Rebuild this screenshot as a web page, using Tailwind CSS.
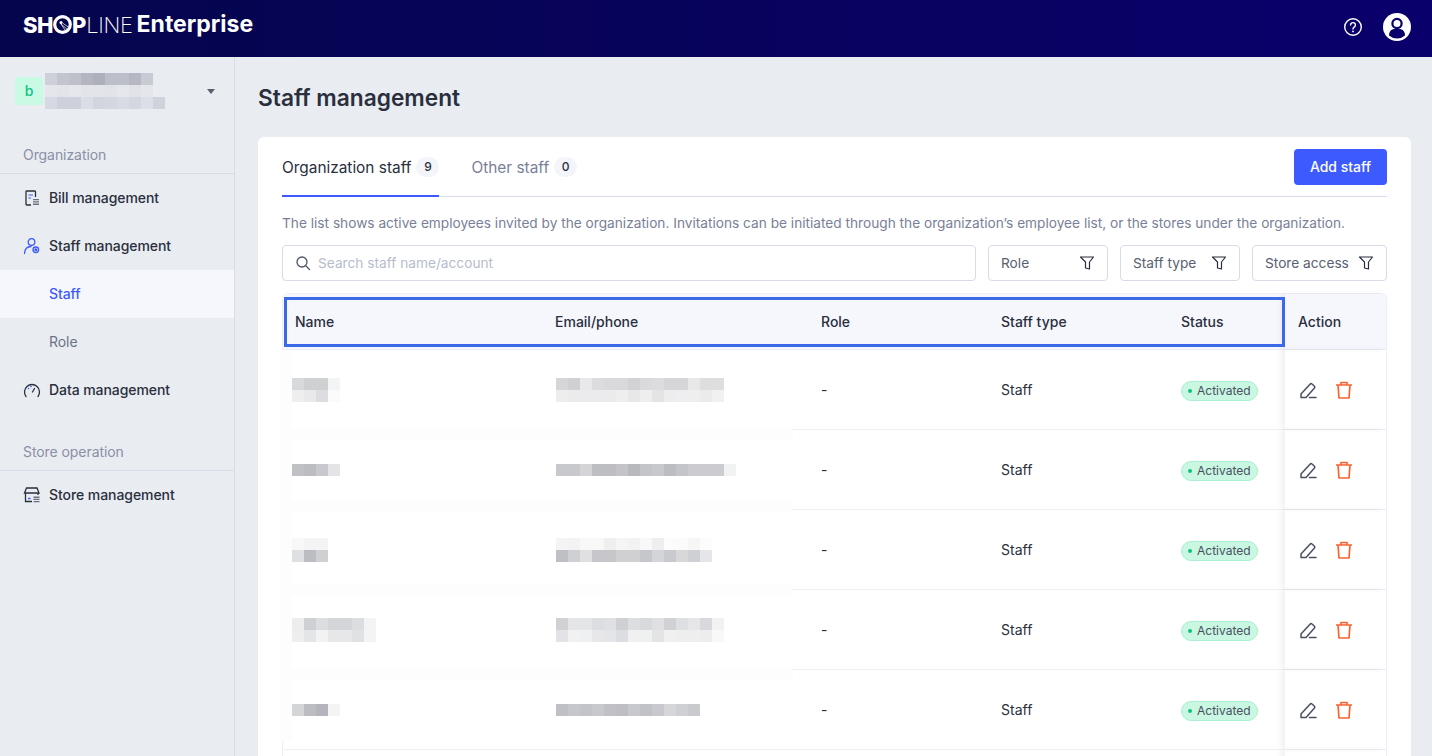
<!DOCTYPE html>
<html lang="en">
<head>
    <meta charset="UTF-8">
    <title>Staff management</title>
    <script src="https://cdn.jsdelivr.net/npm/@tailwindcss/browser@4"></script>
</head>
<body class="h-[756px] overflow-hidden bg-[#e9ecf1] font-['Inter',sans-serif] text-[#2a2f3d]">

<!-- top bar -->
<header class="h-[57px] flex items-center justify-between bg-gradient-to-r from-[#05054d] to-[#0a006c] pl-[23px] pr-[21px]">
    <div class="flex items-center text-white text-[22px] leading-none mb-[8px]">
        <span class="font-extrabold tracking-[-0.5px]">SH</span>
        <svg class="w-[19px] h-[19px]" viewBox="0 0 19 19" fill="none"><circle cx="9.500" cy="9.500" r="7.800" fill="#05054d" stroke="#fff" stroke-width="3.200"/><circle cx="8" cy="7.500" r="1.500" fill="#fff"/><path d="M8 9l7 6M8 9l5 7.500M9.500 8l6.500 4.500" stroke="#fff" stroke-width=".7"/></svg>
        <span class="font-extrabold">P</span>
        <span class="font-extralight tracking-[-0.4px]">LINE</span>
        <span class="font-bold ml-[4px] text-[23px]">Enterprise</span>
    </div>
    <div class="flex items-center gap-[20px] mb-[4px]">
        <svg class="w-[20px] h-[20px]" viewBox="0 0 20 20" fill="none" stroke="#fff" stroke-width="1.400"><circle cx="10" cy="10" r="8.300"/><path d="M7.600 8a2.400 2.400 0 1 1 3.600 2.100c-.8.500-1.200.900-1.200 1.900" stroke-linecap="round"/><circle cx="10" cy="14.400" r=".9" fill="#fff" stroke="none"/></svg>
        <svg class="w-[28px] h-[28px]" viewBox="0 0 28 28"><circle cx="14" cy="14" r="14" fill="#fff"/><circle cx="14" cy="10.500" r="4.600" fill="none" stroke="#0a006c" stroke-width="2.200"/><path d="M6 22.500c0-4.500 3-6.500 5.500-6.500h5c2.500 0 5.500 2 5.500 6.500a12 12 0 0 1-16 0z" fill="#0a006c"/></svg>
    </div>
</header>

<div class="flex h-[699px]">
    <!-- sidebar -->
    <aside class="w-[235px] shrink-0 border-r border-[#d8dbe8] text-sm font-medium tracking-[-0.07px]">
        <div class="h-[73px] flex items-center pl-[15px] pr-[19px] pb-[5px]">
            <div class="w-7 h-7 rounded-[3px] bg-[#c9fbe4] text-[#12c086] flex items-center justify-center text-sm">b</div>
            <div class="ml-[2px] flex-1 flex flex-col -mt-[1px]">
                <div class="flex">
                    <i class="w-3 h-3 bg-[#cdd0d8]"></i><i class="w-3 h-3 bg-[#c2c5ce]"></i><i class="w-3 h-3 bg-[#bec1ca]"></i><i class="w-3 h-3 bg-[#b3b6c0]"></i><i class="w-3 h-3 bg-[#adb0ba]"></i><i class="w-3 h-3 bg-[#bcbfc9]"></i><i class="w-3 h-3 bg-[#bcbfc9]"></i><i class="w-3 h-3 bg-[#b5b8c2]"></i><i class="w-3 h-3 bg-[#c8cbd4]"></i>
                </div>
                <div class="flex">
                    <i class="w-3 h-3 bg-[#e4e6eb]"></i><i class="w-3 h-3 bg-[#e2e4ea]"></i><i class="w-3 h-3 bg-[#e5e7ec]"></i><i class="w-3 h-3 bg-[#e2e4ea]"></i><i class="w-3 h-3 bg-[#e2e4ea]"></i><i class="w-3 h-3 bg-[#e0e3ea]"></i><i class="w-3 h-3 bg-[#e5e7ec]"></i><i class="w-3 h-3 bg-[#e0e2e8]"></i><i class="w-3 h-3 bg-[#e4e6eb]"></i>
                </div>
                <div class="flex">
                    <i class="w-3 h-3 bg-[#d6d9e2]"></i><i class="w-3 h-3 bg-[#ced1db]"></i><i class="w-3 h-3 bg-[#ced1db]"></i><i class="w-3 h-3 bg-[#dadde5]"></i><i class="w-3 h-3 bg-[#d2d5de]"></i><i class="w-3 h-3 bg-[#d4d7e0]"></i><i class="w-3 h-3 bg-[#d8dbe3]"></i><i class="w-3 h-3 bg-[#d4d7e0]"></i><i class="w-3 h-3 bg-[#dcdfe7]"></i><i class="w-3 h-3 bg-[#d0d3dc]"></i>
                </div>
            </div>
            <span class="w-0 h-0 border-x-[4px] border-x-transparent border-t-[5px] border-t-[#5a5f6e] -ml-[2px]"></span>
        </div>

        <div class="h-[44px] flex items-end pb-[8px] pl-[23px] border-b border-[#d8dbe8] font-normal text-[#8a90a6]">Organization</div>
        <div class="h-[48px] flex items-center pl-[23px]">
            <svg class="w-[18px] h-[18px] mr-[8px]" viewBox="0 0 18 18" fill="none"><path d="M12.500 8V2.800a.8.800 0 0 0-.8-.8H3.800a.8.800 0 0 0-.8.800v12.400a.8.800 0 0 0 .8.800H8" stroke="#2a2f3d" stroke-width="1.300"/><path d="M5.500 6h4.500M5.500 9h2.500" stroke="#3d5afe" stroke-width="1.200"/><path d="M10 10h6v1.300h-6zM10 12.300h6v1.300h-6zM10 14.600h6v1.400h-6z" fill="#6b7080"/></svg>
            Bill management
        </div>
        <div class="h-[48px] flex items-center pl-[23px]">
            <svg class="w-[18px] h-[18px] mr-[8px]" viewBox="0 0 18 18" fill="none" stroke="#3d5afe" stroke-width="1.300"><circle cx="8.500" cy="5" r="3.300"/><path d="M1.500 16.500c.3-4.500 2.800-7 6.500-7" stroke-linecap="round"/><circle cx="12.800" cy="12.800" r="2.800"/><circle cx="12.800" cy="12.800" r=".9" fill="#3d5afe"/></svg>
            Staff management
        </div>
        <div class="h-[48px] flex items-center pl-[49px] bg-[#f5f7fd] text-[#3d5afe]">Staff</div>
        <div class="h-[48px] flex items-center pl-[49px] font-normal text-[#6d7387]">Role</div>
        <div class="h-[48px] flex items-center pl-[23px]">
            <svg class="w-[18px] h-[18px] mr-[8px]" viewBox="0 0 18 18" fill="none" stroke="#2a2f3d" stroke-width="1.300"><path d="M3 15.500A7.500 7.500 0 1 1 15 15.500" stroke-linecap="round"/><path d="M11.500 7.500 9.500 11" stroke-linecap="round"/><circle cx="5.500" cy="7.500" r=".8" fill="#3d5afe" stroke="none"/><circle cx="8" cy="5.500" r=".8" fill="#3d5afe" stroke="none"/></svg>
            Data management
        </div>
        <div class="h-[57px] flex items-end pb-[8px] pl-[23px] border-b border-[#d8dbe8] font-normal text-[#8a90a6]">Store operation</div>
        <div class="h-[48px] flex items-center pl-[23px]">
            <svg class="w-[18px] h-[18px] mr-[8px]" viewBox="0 0 18 18" fill="none"><path d="M3.500 2h10.500l2 5H1.500zM2.500 7v8.500H9M15 7v2" stroke="#2a2f3d" stroke-width="1.300"/><path d="M5 12.500h2.500" stroke="#3d5afe" stroke-width="1.500"/><path d="M10.500 10.500h6v1.400h-6zM10.500 12.700h6v1.400h-6zM10.500 14.900h6v1.400h-6z" fill="#6b7080"/></svg>
            Store management
        </div>
    </aside>

    <!-- main -->
    <main class="flex-1 min-w-0 pl-[23px] pr-[21px]">
        <h1 class="h-[80px] pt-[3px] flex items-center text-[22.7px] font-semibold">Staff management</h1>
        <section class="h-[640px] bg-white rounded-md px-[24px] overflow-hidden">
            <div class="h-[60px] flex justify-between items-start border-b border-[#d8dbe8]">
                <div class="flex h-[60px] text-[15.4px] leading-[24px]">
                    <div class="h-[60px] pt-[19px] flex items-start gap-[5px] border-b-2 border-[#3d5afe]">
                        Organization staff
                        <span class="mt-[1px] w-[23px] h-[20px] rounded-full bg-[#f3f5fb] text-xs font-medium flex items-center justify-center">9</span>
                    </div>
                    <div class="ml-[32px] pt-[19px] flex items-start gap-[5px] text-[#7a8098]">
                        Other staff
                        <span class="mt-[1px] w-[23px] h-[20px] rounded-full bg-[#f3f5fb] text-xs font-medium text-[#2a2f3d] flex items-center justify-center">0</span>
                    </div>
                </div>
                <button class="mt-[12px] w-[93px] h-[36px] rounded-[4px] bg-[#3d5afe] text-white text-sm font-medium">Add staff</button>
            </div>
            <p class="mt-[18px] text-[13.68px] leading-[17px] text-[#7a8098]">The list shows active employees invited by the organization. Invitations can be initiated through the organization’s employee list, or the stores under the organization.</p>
            <div class="mt-[13px] flex gap-[12px] text-[13.7px]">
                <div class="flex-1 h-[36px] border border-[#d8dbe8] rounded-[4px] flex items-center pl-[12px] text-[#b7bccd]">
                    <svg class="w-[16px] h-[16px] mr-[7px]" viewBox="0 0 16 16" fill="none" stroke="#4f5566" stroke-width="1.300"><circle cx="7" cy="7" r="5"/><path d="m11 11 3.500 3.500" stroke-linecap="round"/></svg>
                    Search staff name/account
                </div>
                <div class="w-[120px] h-[36px] border border-[#d8dbe8] rounded-[4px] flex items-center justify-between px-[12px] text-[#5a6072]">Role
                    <svg class="w-[16px] h-[16px]" viewBox="0 0 16 16" fill="none" stroke="#2a2f3d" stroke-width="1.200" stroke-linejoin="round"><path d="M1.500 2h13L10.500 7v7l-4-1V7z"/></svg>
                </div>
                <div class="w-[120px] h-[36px] border border-[#d8dbe8] rounded-[4px] flex items-center justify-between px-[12px] text-[#5a6072]">Staff type
                    <svg class="w-[16px] h-[16px]" viewBox="0 0 16 16" fill="none" stroke="#2a2f3d" stroke-width="1.200" stroke-linejoin="round"><path d="M1.500 2h13L10.500 7v7l-4-1V7z"/></svg>
                </div>
                <div class="w-[135px] h-[36px] border border-[#d8dbe8] rounded-[4px] flex items-center justify-between px-[12px] text-[#5a6072]">Store access
                    <svg class="w-[16px] h-[16px]" viewBox="0 0 16 16" fill="none" stroke="#2a2f3d" stroke-width="1.200" stroke-linejoin="round"><path d="M1.500 2h13L10.500 7v7l-4-1V7z"/></svg>
                </div>
            </div>

            <!-- table -->
            <div class="relative mt-[12px] text-sm border border-[#eef0f7] rounded-t-md">
                <div class="h-[56px] grid grid-cols-[260px_266px_180px_180px_116px_1fr] items-center bg-[#f5f7fd] rounded-t-md font-medium border-b border-[#eef0f7]">
                    <div class="pl-[12px]">Name</div>
                    <div class="pl-[12px]">Email/phone</div>
                    <div class="pl-[12px]">Role</div>
                    <div class="pl-[12px]">Staff type</div>
                    <div class="pl-[12px]">Status</div>
                    <div class="pl-[13px] self-stretch flex items-center shadow-[-4px_0_6px_rgba(0,0,0,0.06)]">Action</div>
                </div>

                <!-- row 1 -->
                <div class="relative h-[80px] grid grid-cols-[260px_266px_180px_180px_116px_1fr] items-center border-b border-[#eef0f7]">
                    <div class="pl-[9px] flex flex-col">
                        <div class="flex"><i class="w-3 h-3 bg-[#d8d9db]"></i><i class="w-3 h-3 bg-[#cfd0d2]"></i><i class="w-3 h-3 bg-[#cfd0d2]"></i><i class="w-3 h-3 bg-[#f3f4f4]"></i></div>
                        <div class="flex"><i class="w-3 h-3 bg-[#eeeeef]"></i><i class="w-3 h-3 bg-[#e9e9eb]"></i><i class="w-3 h-3 bg-[#dcdde0]"></i><i class="w-3 h-3 bg-[#fbfbfb]"></i></div>
                    </div>
                    <div class="pl-[13px] flex flex-col">
                        <div class="flex"><i class="w-3 h-3 bg-[#d6d6d8]"></i><i class="w-3 h-3 bg-[#d0d0d2]"></i><i class="w-3 h-3 bg-[#e8e8ea]"></i><i class="w-3 h-3 bg-[#dcdcde]"></i><i class="w-3 h-3 bg-[#d9d9db]"></i><i class="w-3 h-3 bg-[#d9d9db]"></i><i class="w-3 h-3 bg-[#d2d2d4]"></i><i class="w-3 h-3 bg-[#dadadc]"></i><i class="w-3 h-3 bg-[#dcdcde]"></i><i class="w-3 h-3 bg-[#d6d6d8]"></i><i class="w-3 h-3 bg-[#d6d6d8]"></i><i class="w-3 h-3 bg-[#e8e8e8]"></i><i class="w-3 h-3 bg-[#dededf]"></i><i class="w-3 h-3 bg-[#dededf]"></i></div>
                        <div class="flex"><i class="w-3 h-3 bg-[#ededee]"></i><i class="w-3 h-3 bg-[#ebebed]"></i><i class="w-3 h-3 bg-[#ebebed]"></i><i class="w-3 h-3 bg-[#ebebed]"></i><i class="w-3 h-3 bg-[#ebebed]"></i><i class="w-3 h-3 bg-[#eeeeef]"></i><i class="w-3 h-3 bg-[#e8e8e9]"></i><i class="w-3 h-3 bg-[#eeeeef]"></i><i class="w-3 h-3 bg-[#e4e4e7]"></i><i class="w-3 h-3 bg-[#ededee]"></i><i class="w-3 h-3 bg-[#eeeef0]"></i><i class="w-3 h-3 bg-[#eeeeef]"></i><i class="w-3 h-3 bg-[#ebebec]"></i><i class="w-3 h-3 bg-[#f1f1f2]"></i></div>
                    </div>
                    <div class="pl-[12px]">-</div>
                    <div class="pl-[12px]">Staff</div>
                    <div class="pl-[12px]"><span class="inline-flex items-center h-[20px] w-[77px] pl-[6px] gap-[5px] rounded-full bg-[#c9f7e2] border border-[#a9efd0] text-xs text-[#4a5060]"><i class="w-[4px] h-[4px] rounded-full bg-[#12c086]"></i>Activated</span></div>
                    <div class="pl-[14px] self-stretch flex items-center gap-[18px] shadow-[-4px_0_6px_rgba(0,0,0,0.06)]">
                        <svg class="w-[18px] h-[18px]" viewBox="0 0 18 18" fill="none" stroke="#4a5060" stroke-width="1.500" stroke-linejoin="round" stroke-linecap="round"><path d="M2 16.500V13l9-9.800q1-1 2-.2l2.500 2.300q.8.800 0 1.800L7 16.500zM10.500 16.500H17"/></svg>
                        <svg class="w-[18px] h-[18px]" viewBox="0 0 18 18" fill="none" stroke="#fb6232" stroke-width="1.700" stroke-linejoin="round"><path d="M1 4h16M6 4V1.500h6V4M3 4l1 13h10l1-13"/></svg>
                    </div>
                    <span class="absolute -left-[2px] top-[78px] w-[512px] h-[12px] bg-[#fdfdfd]"></span>
                </div>

                <!-- row 2 -->
                <div class="relative h-[80px] grid grid-cols-[260px_266px_180px_180px_116px_1fr] items-center border-b border-[#eef0f7]">
                    <div class="pl-[9px] flex flex-col">
                        <div class="flex"><i class="w-3 h-3 bg-[#c0c1c5]"></i><i class="w-3 h-3 bg-[#bcbdc1]"></i><i class="w-3 h-3 bg-[#c8c9ce]"></i><i class="w-3 h-3 bg-[#e4e4e6]"></i></div>
                    </div>
                    <div class="pl-[13px] flex flex-col">
                        <div class="flex"><i class="w-3 h-3 bg-[#c8c9cd]"></i><i class="w-3 h-3 bg-[#c8c9cd]"></i><i class="w-3 h-3 bg-[#d4d4d6]"></i><i class="w-3 h-3 bg-[#bdbec2]"></i><i class="w-3 h-3 bg-[#bdbec2]"></i><i class="w-3 h-3 bg-[#c4c4c8]"></i><i class="w-3 h-3 bg-[#b8b9bd]"></i><i class="w-3 h-3 bg-[#c4c5ca]"></i><i class="w-3 h-3 bg-[#c8c9cd]"></i><i class="w-3 h-3 bg-[#bcbdc3]"></i><i class="w-3 h-3 bg-[#c4c5ca]"></i><i class="w-3 h-3 bg-[#ccccd0]"></i><i class="w-3 h-3 bg-[#ccccd0]"></i><i class="w-3 h-3 bg-[#ccccd0]"></i><i class="w-3 h-3 bg-[#f1f2f2]"></i></div>
                    </div>
                    <div class="pl-[12px]">-</div>
                    <div class="pl-[12px]">Staff</div>
                    <div class="pl-[12px]"><span class="inline-flex items-center h-[20px] w-[77px] pl-[6px] gap-[5px] rounded-full bg-[#c9f7e2] border border-[#a9efd0] text-xs text-[#4a5060]"><i class="w-[4px] h-[4px] rounded-full bg-[#12c086]"></i>Activated</span></div>
                    <div class="pl-[14px] self-stretch flex items-center gap-[18px] shadow-[-4px_0_6px_rgba(0,0,0,0.06)]">
                        <svg class="w-[18px] h-[18px]" viewBox="0 0 18 18" fill="none" stroke="#4a5060" stroke-width="1.500" stroke-linejoin="round" stroke-linecap="round"><path d="M2 16.500V13l9-9.800q1-1 2-.2l2.500 2.300q.8.800 0 1.800L7 16.500zM10.500 16.500H17"/></svg>
                        <svg class="w-[18px] h-[18px]" viewBox="0 0 18 18" fill="none" stroke="#fb6232" stroke-width="1.700" stroke-linejoin="round"><path d="M1 4h16M6 4V1.500h6V4M3 4l1 13h10l1-13"/></svg>
                    </div>
                    <span class="absolute -left-[2px] top-[70px] w-[512px] h-[12px] bg-[#fdfdfd]"></span>
                </div>

                <!-- row 3 -->
                <div class="relative h-[80px] grid grid-cols-[260px_266px_180px_180px_116px_1fr] items-center border-b border-[#eef0f7]">
                    <div class="pl-[9px] flex flex-col">
                        <div class="flex"><i class="w-3 h-3 bg-[#f8f8f8]"></i><i class="w-3 h-3 bg-[#f4f4f5]"></i><i class="w-3 h-3 bg-[#f4f4f5]"></i></div>
                        <div class="flex"><i class="w-3 h-3 bg-[#dfe0e3]"></i><i class="w-3 h-3 bg-[#bcbdc2]"></i><i class="w-3 h-3 bg-[#d0d0d3]"></i></div>
                    </div>
                    <div class="pl-[13px] flex flex-col">
                        <div class="flex"><i class="w-3 h-3 bg-[#f4f4f4]"></i><i class="w-3 h-3 bg-[#f3f3f3]"></i><i class="w-3 h-3 bg-[#f8f8f8]"></i><i class="w-3 h-3 bg-[#f8f8f8]"></i><i class="w-3 h-3 bg-[#efefef]"></i><i class="w-3 h-3 bg-[#f5f5f5]"></i><i class="w-3 h-3 bg-[#f2f2f2]"></i><i class="w-3 h-3 bg-[#f8f8f8]"></i><i class="w-3 h-3 bg-[#eeeeee]"></i><i class="w-3 h-3 bg-[#fcfcfc]"></i><i class="w-3 h-3 bg-[#fbfbfb]"></i><i class="w-3 h-3 bg-[#f6f6f6]"></i><i class="w-3 h-3 bg-[#fcfcfc]"></i></div>
                        <div class="flex"><i class="w-3 h-3 bg-[#bfc0c5]"></i><i class="w-3 h-3 bg-[#cfd0d3]"></i><i class="w-3 h-3 bg-[#e0e0e3]"></i><i class="w-3 h-3 bg-[#c6c6cb]"></i><i class="w-3 h-3 bg-[#c6c6cb]"></i><i class="w-3 h-3 bg-[#d0d0d3]"></i><i class="w-3 h-3 bg-[#d0d0d3]"></i><i class="w-3 h-3 bg-[#c6c7cc]"></i><i class="w-3 h-3 bg-[#d4d5d8]"></i><i class="w-3 h-3 bg-[#c9cad0]"></i><i class="w-3 h-3 bg-[#d8d8db]"></i><i class="w-3 h-3 bg-[#cfd0d3]"></i><i class="w-3 h-3 bg-[#e5e6ea]"></i></div>
                    </div>
                    <div class="pl-[12px]">-</div>
                    <div class="pl-[12px]">Staff</div>
                    <div class="pl-[12px]"><span class="inline-flex items-center h-[20px] w-[77px] pl-[6px] gap-[5px] rounded-full bg-[#c9f7e2] border border-[#a9efd0] text-xs text-[#4a5060]"><i class="w-[4px] h-[4px] rounded-full bg-[#12c086]"></i>Activated</span></div>
                    <div class="pl-[14px] self-stretch flex items-center gap-[18px] shadow-[-4px_0_6px_rgba(0,0,0,0.06)]">
                        <svg class="w-[18px] h-[18px]" viewBox="0 0 18 18" fill="none" stroke="#4a5060" stroke-width="1.500" stroke-linejoin="round" stroke-linecap="round"><path d="M2 16.500V13l9-9.800q1-1 2-.2l2.500 2.300q.8.800 0 1.800L7 16.500zM10.500 16.500H17"/></svg>
                        <svg class="w-[18px] h-[18px]" viewBox="0 0 18 18" fill="none" stroke="#fb6232" stroke-width="1.700" stroke-linejoin="round"><path d="M1 4h16M6 4V1.500h6V4M3 4l1 13h10l1-13"/></svg>
                    </div>
                    <span class="absolute -left-[2px] top-[74px] w-[512px] h-[12px] bg-[#fdfdfd]"></span>
                </div>

                <!-- row 4 -->
                <div class="relative h-[80px] grid grid-cols-[260px_266px_180px_180px_116px_1fr] items-center border-b border-[#eef0f7]">
                    <div class="pl-[9px] flex flex-col">
                        <div class="flex"><i class="w-3 h-3 bg-[#ededee]"></i><i class="w-3 h-3 bg-[#cfd0d3]"></i><i class="w-3 h-3 bg-[#dcdde0]"></i><i class="w-3 h-3 bg-[#d4d5d8]"></i><i class="w-3 h-3 bg-[#d4d5d8]"></i><i class="w-3 h-3 bg-[#dcdde0]"></i><i class="w-3 h-3 bg-[#f4f4f5]"></i></div>
                        <div class="flex"><i class="w-3 h-3 bg-[#eeeeef]"></i><i class="w-3 h-3 bg-[#e4e5e8]"></i><i class="w-3 h-3 bg-[#f2f2f3]"></i><i class="w-3 h-3 bg-[#e7e7ea]"></i><i class="w-3 h-3 bg-[#e7e7ea]"></i><i class="w-3 h-3 bg-[#e0e1e4]"></i><i class="w-3 h-3 bg-[#f4f4f5]"></i></div>
                    </div>
                    <div class="pl-[13px] flex flex-col">
                        <div class="flex"><i class="w-3 h-3 bg-[#d0d1d4]"></i><i class="w-3 h-3 bg-[#e5e5e7]"></i><i class="w-3 h-3 bg-[#e4e5e8]"></i><i class="w-3 h-3 bg-[#dcdde0]"></i><i class="w-3 h-3 bg-[#dfe0e3]"></i><i class="w-3 h-3 bg-[#d0d0d4]"></i><i class="w-3 h-3 bg-[#dcdde1]"></i><i class="w-3 h-3 bg-[#d8d9dc]"></i><i class="w-3 h-3 bg-[#e0e0e4]"></i><i class="w-3 h-3 bg-[#d0d1d5]"></i><i class="w-3 h-3 bg-[#dedfe2]"></i><i class="w-3 h-3 bg-[#e6e6e8]"></i><i class="w-3 h-3 bg-[#d8d9dd]"></i><i class="w-3 h-3 bg-[#f2f2f3]"></i></div>
                        <div class="flex"><i class="w-3 h-3 bg-[#e2e3e6]"></i><i class="w-3 h-3 bg-[#f1f1f2]"></i><i class="w-3 h-3 bg-[#eff0f2]"></i><i class="w-3 h-3 bg-[#e7e7ea]"></i><i class="w-3 h-3 bg-[#e4e5e8]"></i><i class="w-3 h-3 bg-[#dcdde0]"></i><i class="w-3 h-3 bg-[#f0f0f1]"></i><i class="w-3 h-3 bg-[#eff0f0]"></i><i class="w-3 h-3 bg-[#e4e4e7]"></i><i class="w-3 h-3 bg-[#f0f0f1]"></i><i class="w-3 h-3 bg-[#eeeeef]"></i><i class="w-3 h-3 bg-[#eeeeef]"></i><i class="w-3 h-3 bg-[#ededee]"></i><i class="w-3 h-3 bg-[#f8f8f8]"></i></div>
                    </div>
                    <div class="pl-[12px]">-</div>
                    <div class="pl-[12px]">Staff</div>
                    <div class="pl-[12px]"><span class="inline-flex items-center h-[20px] w-[77px] pl-[6px] gap-[5px] rounded-full bg-[#c9f7e2] border border-[#a9efd0] text-xs text-[#4a5060]"><i class="w-[4px] h-[4px] rounded-full bg-[#12c086]"></i>Activated</span></div>
                    <div class="pl-[14px] self-stretch flex items-center gap-[18px] shadow-[-4px_0_6px_rgba(0,0,0,0.06)]">
                        <svg class="w-[18px] h-[18px]" viewBox="0 0 18 18" fill="none" stroke="#4a5060" stroke-width="1.500" stroke-linejoin="round" stroke-linecap="round"><path d="M2 16.500V13l9-9.800q1-1 2-.2l2.500 2.300q.8.800 0 1.800L7 16.500zM10.500 16.500H17"/></svg>
                        <svg class="w-[18px] h-[18px]" viewBox="0 0 18 18" fill="none" stroke="#fb6232" stroke-width="1.700" stroke-linejoin="round"><path d="M1 4h16M6 4V1.500h6V4M3 4l1 13h10l1-13"/></svg>
                    </div>
                    <span class="absolute -left-[2px] top-[78px] w-[512px] h-[12px] bg-[#fdfdfd]"></span>
                </div>

                <!-- row 5 -->
                <div class="relative h-[80px] grid grid-cols-[260px_266px_180px_180px_116px_1fr] items-center border-b border-[#eef0f7]">
                    <div class="pl-[9px] flex flex-col">
                        <div class="flex"><i class="w-3 h-3 bg-[#d4d5d7]"></i><i class="w-3 h-3 bg-[#bcbdc2]"></i><i class="w-3 h-3 bg-[#b4b5bc]"></i><i class="w-3 h-3 bg-[#f4f4f5]"></i></div>
                    </div>
                    <div class="pl-[13px] flex flex-col">
                        <div class="flex"><i class="w-3 h-3 bg-[#bfc0c5]"></i><i class="w-3 h-3 bg-[#c6c7cc]"></i><i class="w-3 h-3 bg-[#c3c4c9]"></i><i class="w-3 h-3 bg-[#c8c9cd]"></i><i class="w-3 h-3 bg-[#c0c0c6]"></i><i class="w-3 h-3 bg-[#bebfc5]"></i><i class="w-3 h-3 bg-[#c8c9ce]"></i><i class="w-3 h-3 bg-[#c1c2c7]"></i><i class="w-3 h-3 bg-[#c8c9ce]"></i><i class="w-3 h-3 bg-[#d6d6d9]"></i><i class="w-3 h-3 bg-[#cfd0d3]"></i><i class="w-3 h-3 bg-[#c9cacd]"></i></div>
                    </div>
                    <div class="pl-[12px]">-</div>
                    <div class="pl-[12px]">Staff</div>
                    <div class="pl-[12px]"><span class="inline-flex items-center h-[20px] w-[77px] pl-[6px] gap-[5px] rounded-full bg-[#c9f7e2] border border-[#a9efd0] text-xs text-[#4a5060]"><i class="w-[4px] h-[4px] rounded-full bg-[#12c086]"></i>Activated</span></div>
                    <div class="pl-[14px] self-stretch flex items-center gap-[18px] shadow-[-4px_0_6px_rgba(0,0,0,0.06)]">
                        <svg class="w-[18px] h-[18px]" viewBox="0 0 18 18" fill="none" stroke="#4a5060" stroke-width="1.500" stroke-linejoin="round" stroke-linecap="round"><path d="M2 16.500V13l9-9.800q1-1 2-.2l2.500 2.300q.8.800 0 1.800L7 16.500zM10.500 16.500H17"/></svg>
                        <svg class="w-[18px] h-[18px]" viewBox="0 0 18 18" fill="none" stroke="#fb6232" stroke-width="1.700" stroke-linejoin="round"><path d="M1 4h16M6 4V1.500h6V4M3 4l1 13h10l1-13"/></svg>
                    </div>
                </div>

                <!-- row 6, cut off by the window -->
                <div class="h-[80px] grid grid-cols-[260px_266px_180px_180px_116px_1fr]">
                    <div class="col-start-6 shadow-[-4px_0_6px_rgba(0,0,0,0.06)]"></div>
                </div>

                <!-- blur left behind on the table's left edge -->
                <span class="absolute -left-[3px] top-[57px] w-[12px] h-[390px] bg-[#fdfdfd]"></span>
            </div>

            <div class="absolute left-[284px] top-[297px] w-[1001px] h-[50px] border-[3px] border-[#3a6ae8]"></div>
        </section>
    </main>
</div>
</body>
</html>
